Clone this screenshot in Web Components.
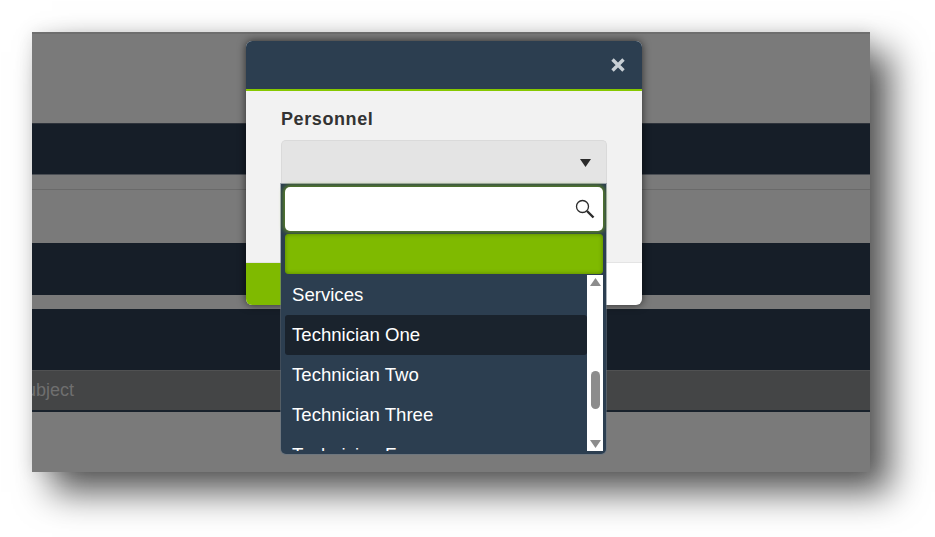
<!DOCTYPE html>
<html lang="en">
<head>
<meta charset="utf-8">
<title>Personnel</title>
<style>
  html, body { margin: 0; background: #fff; }
  body { width: 935px; height: 537px; overflow: hidden; font-family: "Liberation Sans", Arial, sans-serif; }
</style>
</head>
<body>
<app-screen>
  <person-modal label="Personnel">
    <person-option>Services</person-option>
    <person-option hover>Technician One</person-option>
    <person-option>Technician Two</person-option>
    <person-option>Technician Three</person-option>
    <person-option>Technician Four</person-option>
  </person-modal>
</app-screen>

<script>
class AppScreen extends HTMLElement {
  connectedCallback() {
    this.attachShadow({ mode: 'open' });
    this.shadowRoot.innerHTML = `
      <style>
        :host {
          display: block;
          position: absolute;
          top: 32px;
          left: 32px;
          width: 838px;
          height: 440px;
          box-sizing: border-box;
          background: #7a7a7a;
          box-shadow: 20px 20px 34px rgba(0,0,0,0.66), 0 0 16px rgba(0,0,0,0.1);
          color: #6f6f6f;
          font-size: 18px;
        }
        .page { height: 100%; overflow: hidden; display: flex; flex-direction: column; }
        .top { height: 2px; background: #6e6e6e; }
        .gap1 { height: 89px; }
        .band { background: #161e28; flex: none; }
        .b1 { height: 52px; border-top: 1px solid #2e333b; border-bottom: 1px solid #4a4e54; box-sizing: border-box; }
        .rule { height: 14px; border-bottom: 1px solid #6a6a6a; box-sizing: content-box; }
        .gap2 { height: 53px; }
        .b2 { height: 52px; }
        .gap3 { height: 14px; }
        .b3 { height: 61px; }
        .subject {
          height: 40px;
          background: #444546;
          border-top: 1px solid #505152;
          box-sizing: border-box;
          display: flex;
          align-items: center;
          flex: none;
        }
        .subject span { margin-left: -18px; }
        .line { height: 2px; background: #18212b; flex: none; }
        .rest { flex: 1; }
      </style>
      <div class="page">
        <div class="top"></div>
        <div class="gap1"></div>
        <div class="band b1"></div>
        <div class="rule"></div>
        <div class="gap2"></div>
        <div class="band b2"></div>
        <div class="gap3"></div>
        <div class="band b3"></div>
        <div class="subject"><span>Subject</span></div>
        <div class="line"></div>
        <div class="rest"></div>
      </div>
      <slot></slot>
    `;
  }
}

class PersonOption extends HTMLElement {
  connectedCallback() {
    this.attachShadow({ mode: 'open' });
    this.shadowRoot.innerHTML = `
      <style>
        :host {
          display: flex;
          align-items: center;
          flex: none;
          height: 40px;
          box-sizing: border-box;
          padding: 0 0 0 7px;
          border-radius: 3px;
          color: #fff;
          font-size: 18.6px;
          white-space: nowrap;
        }
        :host([hover]) { background: #1a232d; }
      </style>
      <slot></slot>
    `;
  }
}

class PersonModal extends HTMLElement {
  connectedCallback() {
    this.attachShadow({ mode: 'open' });
    const label = this.getAttribute('label');
    this.shadowRoot.innerHTML = `
      <style>
        :host {
          display: flex;
          flex-direction: column;
          position: absolute;
          top: 9px;
          left: 214px;
          width: 396px;
          height: 264px;
          border-radius: 6px;
          background: #fff;
          box-shadow: 0 0 9px rgba(0,0,0,0.65);
        }
        header {
          flex: none;
          display: flex;
          align-items: center;
          justify-content: flex-end;
          padding: 0 16px 0 0;
          box-sizing: border-box;
          background: #2c3e50;
          border-bottom: 2px solid #86c800;
          height: 50px;
          border-radius: 6px 6px 0 0;
        }
        .body {
          flex: 1;
          background: #f2f2f2;
          padding: 16px 35px 0 35px;
          border-bottom: 1px solid #e4e4e4;
        }
        label {
          display: block;
          font-size: 18px;
          font-weight: bold;
          letter-spacing: 0.6px;
          line-height: 24px;
          color: #333;
        }
        .select {
          margin-top: 9px;
          height: 44px;
          box-sizing: border-box;
          background: #e4e4e4;
          border: 1px solid #dadada;
          border-bottom: none;
          border-radius: 5px 5px 0 0;
          display: flex;
          align-items: center;
          justify-content: flex-end;
          padding: 0 15px 0 0;
        }
        footer { height: 42px; flex: none; display: flex; border-radius: 0 0 6px 6px; overflow: hidden; }
        .ok { width: 36px; background: #7fba00; }
        .drop {
          position: absolute;
          left: 35px;
          top: 143px;
          width: 325px;
          height: 270px;
          box-sizing: border-box;
          padding: 3px 3px 3px 4px;
          display: flex;
          flex-direction: column;
          background: #2c3e50;
          border-radius: 0 0 5px 5px;
          box-shadow: 0 0 0 1px rgba(100,115,130,0.55);
        }
        .drop::before {
          content: "";
          position: absolute;
          inset: 0 0 auto 0;
          height: 48px;
          box-shadow: 0 -1px 7px rgba(127,186,0,0.5);
          z-index: -1;
        }
        .search {
          height: 44px;
          flex: none;
          background: #fff;
          border-radius: 5px;
          box-shadow: 0 0 4px 2px rgba(127,186,0,0.55);
          display: flex;
          align-items: center;
          justify-content: flex-end;
          padding-right: 8px;
        }
        .chosen {
          height: 40px;
          flex: none;
          margin-top: 3px;
          background: #7fba00;
          border-radius: 4px;
          box-shadow: inset 0 0 4px #567f00;
        }
        .list { flex: 1; min-height: 0; display: flex; margin-top: 1px; }
        .items { flex: 1; min-width: 0; overflow: hidden; display: flex; flex-direction: column; }
        .bar {
          width: 16px;
          flex: none;
          background: #fff;
          position: relative;
        }
        .thumb {
          position: absolute;
          left: 4px;
          top: 96px;
          width: 9px;
          height: 38px;
          border-radius: 5px;
          background: #8c8c8c;
        }
        .bar svg { position: absolute; left: 3px; display: block; }
      </style>
      <header>
        <svg width="16" height="16" viewBox="0 0 16 16"><path d="M2.5 2.5 13.5 13.5M13.5 2.5 2.5 13.5" stroke="#c9d0d6" stroke-width="3.4" fill="none"/></svg>
      </header>
      <div class="body">
        <label>${label}</label>
        <div class="select">
          <svg width="11" height="8" viewBox="0 0 11 8"><path d="M0 0H11L5.5 8Z" fill="#2b2b2b"/></svg>
        </div>
      </div>
      <footer><div class="ok"></div></footer>
      <div class="drop">
        <div class="search">
          <svg width="20" height="20" viewBox="0 0 20 20" fill="none" stroke="#2b2b2b"><circle cx="7.5" cy="7.5" r="6" stroke-width="1.3"/><path d="M12 12 18.5 18.5" stroke-width="2.4"/></svg>
        </div>
        <div class="chosen"></div>
        <div class="list">
          <div class="items"><slot></slot></div>
          <div class="bar">
            <svg style="top:3px" width="11" height="8" viewBox="0 0 11 8"><path d="M0 8H11L5.5 0Z" fill="#8c8c8c"/></svg>
            <div class="thumb"></div>
            <svg style="bottom:3px" width="11" height="8" viewBox="0 0 11 8"><path d="M0 0H11L5.5 8Z" fill="#8c8c8c"/></svg>
          </div>
        </div>
      </div>
    `;
  }
}

customElements.define('app-screen', AppScreen);
customElements.define('person-option', PersonOption);
customElements.define('person-modal', PersonModal);
</script>
</body>
</html>
